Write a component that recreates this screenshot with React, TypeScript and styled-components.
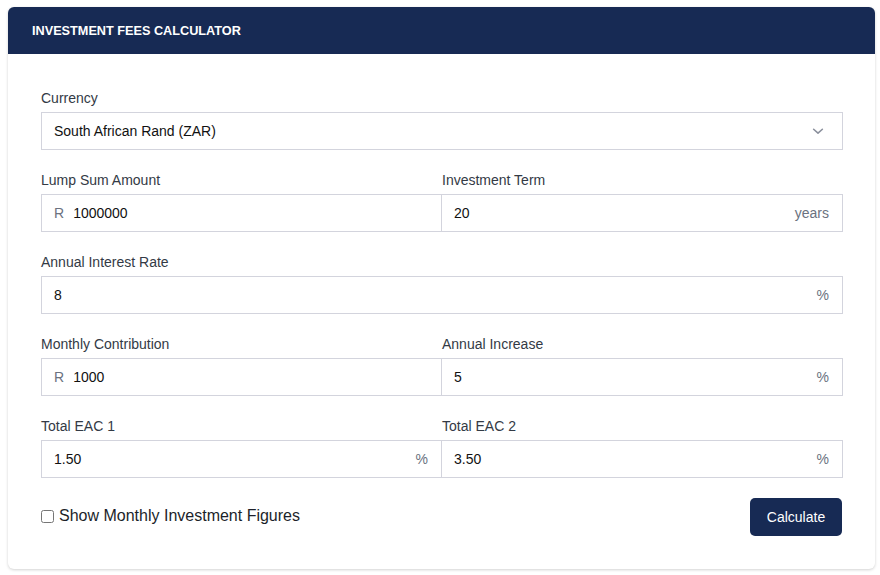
import React from "react";
import styled, { createGlobalStyle } from "styled-components";

const Global = createGlobalStyle`
  html, body { margin: 0; padding: 0; background: #ffffff; }
  body { font-family: "Liberation Sans", Arial, sans-serif; }
  * { box-sizing: border-box; }
`;

const Page = styled.div`
  padding: 7px 5px 6px 8px;
`;

const Card = styled.div`
  width: 867px;
  border-radius: 6px;
  background: #fff;
  box-shadow: 0 1px 3px rgba(0, 0, 0, 0.18);
  overflow: hidden;
`;

const Header = styled.div`
  height: 47px;
  background: #172a54;
  color: #fff;
  display: flex;
  align-items: center;
  padding-left: 24px;
  font-size: 12.7px;
  font-weight: bold;
  text-transform: uppercase;
`;

const Body = styled.div`
  padding: 34px 32px 33px 33px;
  display: flex;
  flex-direction: column;
`;

const Row = styled.div<{ $cols: number }>`
  display: grid;
  grid-template-columns: repeat(${(p) => p.$cols}, 1fr);
  margin-bottom: 20px;
`;

const Field = styled.div`
  display: flex;
  flex-direction: column;
`;

const Label = styled.div`
  font-size: 14px;
  line-height: 20px;
  color: #333a45;
  margin-bottom: 4px;
`;

const Box = styled.div<{ $joined?: boolean }>`
  height: 38px;
  border: 1px solid #d3d4dd;
  ${(p) => (p.$joined ? "border-left: none;" : "")}
  display: flex;
  align-items: center;
  padding: 0 13px 0 12px;
  font-size: 14px;
  color: #111;
  background: #fff;
`;

const Prefix = styled.span`
  color: #6b7280;
  margin-right: 9px;
`;

const Value = styled.span`
  flex: 1;
`;

const Suffix = styled.span`
  color: #6b7280;
`;

const Chevron = styled.svg`
  width: 14px;
  height: 14px;
  margin-right: 4px;
`;

const Footer = styled.div`
  display: flex;
  align-items: center;
  justify-content: space-between;
  margin-top: 0;
`;

const Check = styled.label`
  display: flex;
  align-items: center;
  font-size: 16px;
  color: #1c1f2a;
  gap: 5px;
  margin-top: -2px;
`;

const CheckInput = styled.input`
  margin: 0;
  width: 13px;
  height: 13px;
`;

const Button = styled.button`
  height: 38px;
  width: 92px;
  margin-right: 1px;
  background: #172a54;
  color: #fff;
  border: none;
  border-radius: 5px;
  font-family: "Liberation Sans", Arial, sans-serif;
  font-size: 14px;
`;

type F = { label: string; value: string; prefix?: string; suffix?: string };

const Input = ({ f, joined }: { f: F; joined?: boolean }) => (
  <Field>
    <Label>{f.label}</Label>
    <Box $joined={joined}>
      {f.prefix && <Prefix>{f.prefix}</Prefix>}
      <Value>{f.value}</Value>
      {f.suffix && <Suffix>{f.suffix}</Suffix>}
    </Box>
  </Field>
);

const rows: F[][] = [
  [
    { label: "Lump Sum Amount", value: "1000000", prefix: "R" },
    { label: "Investment Term", value: "20", suffix: "years" },
  ],
  [{ label: "Annual Interest Rate", value: "8", suffix: "%" }],
  [
    { label: "Monthly Contribution", value: "1000", prefix: "R" },
    { label: "Annual Increase", value: "5", suffix: "%" },
  ],
  [
    { label: "Total EAC 1", value: "1.50", suffix: "%" },
    { label: "Total EAC 2", value: "3.50", suffix: "%" },
  ],
];

export default function App() {
  return (
    <>
      <Global />
      <Page>
        <Card>
          <Header>Investment Fees Calculator</Header>
          <Body>
            <Row $cols={1}>
              <Field>
                <Label>Currency</Label>
                <Box>
                  <Value>South African Rand (ZAR)</Value>
                  <Chevron viewBox="0 0 16 16" fill="none" stroke="#8a8f9c" strokeWidth="1.8" strokeLinecap="round" strokeLinejoin="round">
                    <path d="M3 6l5 4.5L13 6" />
                  </Chevron>
                </Box>
              </Field>
            </Row>
            {rows.map((r, i) => (
              <Row key={i} $cols={r.length}>
                {r.map((f, j) => (
                  <Input key={j} f={f} joined={j > 0} />
                ))}
              </Row>
            ))}
            <Footer>
              <Check>
                <CheckInput type="checkbox" />
                Show Monthly Investment Figures
              </Check>
              <Button>Calculate</Button>
            </Footer>
          </Body>
        </Card>
      </Page>
    </>
  );
}
